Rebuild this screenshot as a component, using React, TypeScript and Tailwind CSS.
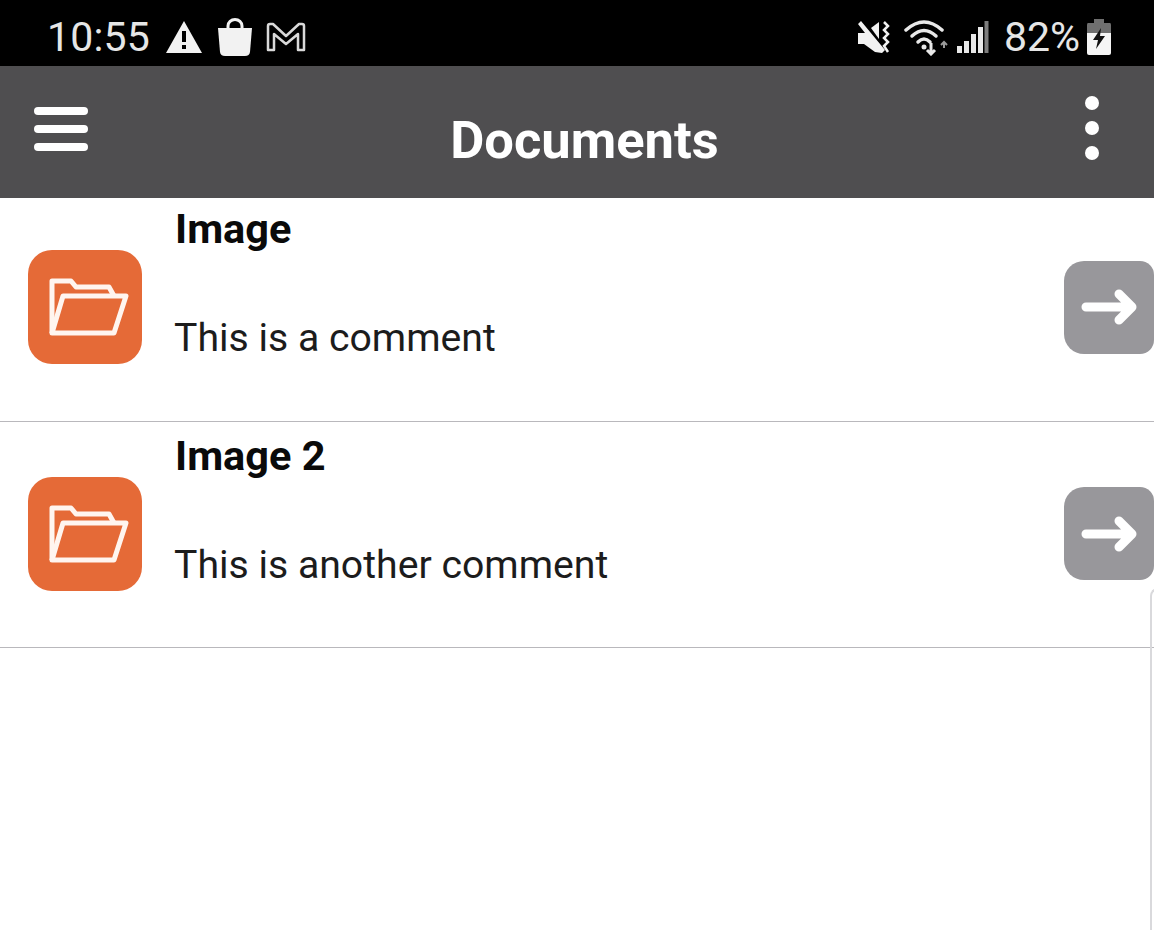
const ROWS = [
  {
    title: "Image",
    comment: "This is a comment",
    rowClass: "h-[224px] pb-[5px]",
    textClass: "pt-[8px]",
  },
  {
    title: "Image 2",
    comment: "This is another comment",
    rowClass: "h-[226px] pb-[2px]",
    textClass: "pt-[11px]",
  },
];

function WarningIcon() {
  return (
    <svg viewBox="0 0 38 34" className="w-[38px] h-[34px]">
      <path fillRule="evenodd" fill="#f2f2f2" d="M19 1 L37 33 H1 Z M17 11 V22 H21 V11 Z M17 25 V29 H21 V25 Z" />
    </svg>
  );
}

function BagIcon() {
  return (
    <svg viewBox="0 0 36 40" className="w-[36px] h-[40px]">
      <path d="M11 13 V9 a7 6.500 0 0 1 14 0 V13" fill="none" stroke="#f2f2f2" strokeWidth="3" />
      <path fill="#f2f2f2" d="M1 11 H35 L33 35 Q32.500 39 28 39 H8 Q3.500 39 3 35 Z" />
    </svg>
  );
}

function GmailIcon() {
  return (
    <svg viewBox="0 0 42 32" className="w-[42px] h-[32px]">
      <path
        d="M3 29 V5 Q3 3 5 3 H8 L21 15 L34 3 H37 Q39 3 39 5 V29 H33 V13 L21 23 L9 13 V29 Z"
        fill="none"
        stroke="#d9d9d9"
        strokeWidth="2.500"
        strokeLinejoin="round"
      />
    </svg>
  );
}

function MuteIcon() {
  return (
    <svg viewBox="0 0 34 34" className="w-[34px] h-[34px]">
      <path fill="#f2f2f2" d="M1 4 L4 1 L28 30 L25 33 L18 32 L7 24 H1 V13 H8 Z" />
      <path fill="#f2f2f2" d="M14 8 L22 2 V19 Z" />
      <path d="M27 2 L31 6 L27 10 L31 14 L27 18 L31 22 L27 26 L31 32" fill="none" stroke="#f2f2f2" strokeWidth="2.500" />
    </svg>
  );
}

function WifiIcon() {
  return (
    <svg viewBox="0 0 48 38" className="w-[48px] h-[38px]">
      <g fill="none" stroke="#e8e8e8" strokeWidth="3.500" strokeLinecap="round">
        <path d="M2 12 Q20 -4 38 12" />
        <path d="M8 18 Q20 7 32 18" />
        <path d="M14 24 Q20 18 26 24" />
      </g>
      <circle cx="20" cy="29" r="2.500" fill="#e8e8e8" />
      <path d="M27 25 V36 M23 32 L27 36 L31 32" fill="none" stroke="#e8e8e8" strokeWidth="3" />
      <path d="M40 25 V30 M37 27 L40 24 L43 27" fill="none" stroke="#9a9a9a" strokeWidth="2" />
    </svg>
  );
}

function SignalIcon() {
  return (
    <svg viewBox="0 0 32 32" className="w-[32px] h-[32px]">
      <rect x="0" y="25" width="5" height="7" fill="#e8e8e8" />
      <rect x="7" y="20" width="5" height="12" fill="#e8e8e8" />
      <rect x="14" y="13" width="5" height="19" fill="#e8e8e8" />
      <rect x="21" y="6" width="5" height="26" fill="#e8e8e8" />
      <rect x="27.500" y="0" width="4" height="32" fill="#7d7d7d" />
    </svg>
  );
}

function BatteryIcon() {
  return (
    <svg viewBox="0 0 26 36" className="w-[26px] h-[36px]">
      <path fill="#6f6f6f" d="M8 0 H18 V4 H24 Q25 4 25 6 V14 H1 V6 Q1 4 2 4 H8 Z" />
      <path fill="#f5f5f5" d="M1 14 H25 V34 Q25 36 23 36 H3 Q1 36 1 34 Z" />
      <path fill="#111111" d="M15 9 L7 21 H12 L10 30 L19 17 H14 Z" />
    </svg>
  );
}

function FolderIcon() {
  return (
    <svg viewBox="0 0 80 60" className="w-[80px] h-[60px]">
      <g fill="none" stroke="#fff5ef" strokeWidth="5" strokeLinejoin="round">
        <path d="M3 55 V3 H22 L27 9 H60 L65 18" />
        <path d="M3 55 L14 18 H77 L65 55 Z" />
      </g>
    </svg>
  );
}

function ArrowIcon() {
  return (
    <svg viewBox="0 0 58 40" className="w-[58px] h-[40px]">
      <path
        d="M5 20 H50 M38 7 L51 20 L38 33"
        fill="none"
        stroke="#ffffff"
        strokeWidth="9"
        strokeLinecap="round"
        strokeLinejoin="round"
      />
    </svg>
  );
}

export default function App() {
  return (
    <div className="relative h-[930px] w-[1154px] overflow-hidden bg-white font-['Roboto',sans-serif]">
      {/* Status bar */}
      <div className="flex h-[66px] items-center justify-between bg-black pl-[47px] pr-[42px] pt-[8px] text-[41px] leading-none text-[#e6e6e6]">
        <div className="flex items-center">
          <span className="mr-[15px] tracking-[0.2px]">10:55</span>
          <WarningIcon />
          <span className="ml-[14px]"><BagIcon /></span>
          <span className="ml-[12px]"><GmailIcon /></span>
        </div>
        <div className="flex items-center">
          <MuteIcon />
          <span className="ml-[13px]"><WifiIcon /></span>
          <span className="ml-[5px]"><SignalIcon /></span>
          <span className="ml-[15px]">82%</span>
          <span className="ml-[6px]"><BatteryIcon /></span>
        </div>
      </div>

      {/* Title bar */}
      <header className="flex h-[132px] items-center justify-between bg-[#4f4e50] pl-[34px] pr-[55px]">
        <div className="mb-[7px] flex w-[54px] flex-col gap-[10px]">
          <span className="h-[8px] rounded-full bg-white" />
          <span className="h-[8px] rounded-full bg-white" />
          <span className="h-[8px] rounded-full bg-white" />
        </div>
        <h1 className="mr-[4px] mt-[16px] text-[52.500px] font-bold leading-none text-white">Documents</h1>
        <div className="mb-[8px] flex flex-col gap-[11px]">
          <span className="h-[14px] w-[14px] rounded-full bg-white" />
          <span className="h-[14px] w-[14px] rounded-full bg-white" />
          <span className="h-[14px] w-[14px] rounded-full bg-white" />
        </div>
      </header>

      {/* List */}
      <div>
        {ROWS.map((row) => (
          <div key={row.title} className={`flex items-center border-b border-[#b9b8bc] pl-[28px] ${row.rowClass}`}>
            <div className="flex h-[114px] w-[114px] items-center justify-center rounded-[24px] bg-[#e56a37] pl-[8px] pt-[2px]">
              <FolderIcon />
            </div>
            <div className={`ml-[32px] flex h-full flex-1 flex-col ${row.textClass}`}>
              <div className="pl-[1px] text-[41.500px] font-bold leading-[46px] text-[#0a0a0a]">{row.title}</div>
              <div className="mt-[63px] text-[39.200px] leading-[46px] text-[#1c1c1c]">{row.comment}</div>
            </div>
            <div className="flex h-[93px] w-[90px] items-center justify-center rounded-l-[20px] rounded-r-[14px] bg-[#98979b] pl-[2px]">
              <ArrowIcon />
            </div>
          </div>
        ))}
      </div>

      {/* Partly visible panel edge */}
      <div className="absolute left-[1150px] top-[588px] h-[360px] w-[20px] rounded-tl-[8px] border-l-2 border-t-2 border-[#d9d9dc]" />
    </div>
  );
}
